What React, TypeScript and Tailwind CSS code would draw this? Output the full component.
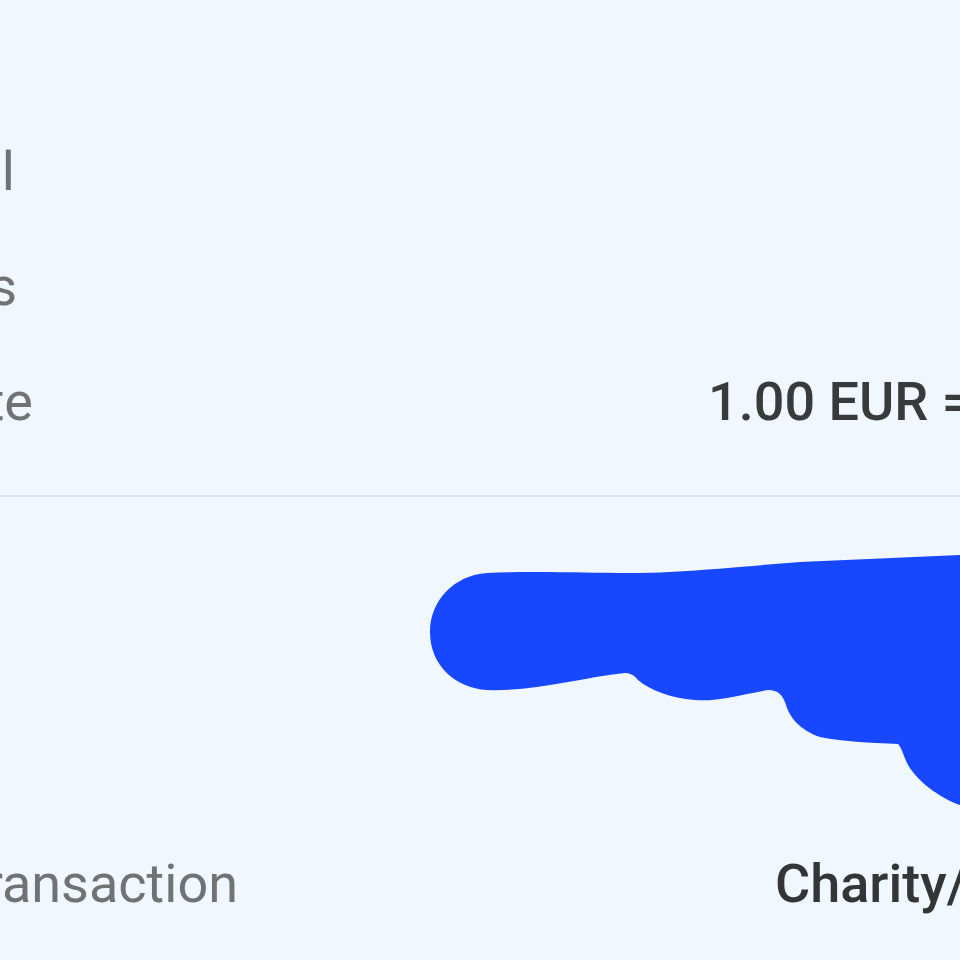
import React from "react";

const font = { fontFamily: "Roboto, 'Noto Sans', sans-serif" };

export default function App() {
  return (
    <div
      className="relative w-[960px] h-[960px] overflow-hidden bg-[#f0f7fe]"
      style={font}
    >
      <div className="flex flex-col pt-[114px]">
        <div className="flex h-[115px] items-center text-[54px] leading-[54px] whitespace-nowrap">
          <div className="flex w-[15px] shrink-0 justify-end text-[#707274]">
            <span>Total</span>
          </div>
        </div>
        <div className="flex h-[115px] items-center text-[54px] leading-[54px] whitespace-nowrap">
          <div className="flex w-[17px] shrink-0 justify-end text-[#707274]">
            <span>Fees</span>
          </div>
        </div>
        <div className="flex h-[115px] items-center text-[54px] leading-[54px] whitespace-nowrap">
          <div className="flex w-[33px] shrink-0 justify-end text-[#707274]">
            <span>Exchange rate</span>
          </div>
          <span className="ml-[675px] font-medium text-[#383a3c]">
            1.00 EUR = 1.00 EUR
          </span>
        </div>
      </div>

      <div className="mt-[36px] h-[2px] bg-[#dce4ed]" />

      <div className="flex flex-col pt-[329px]">
        <div className="flex h-[115px] items-center text-[54px] leading-[54px] whitespace-nowrap">
          <div className="flex w-[238px] shrink-0 justify-end text-[#707274]">
            <span>Transaction</span>
          </div>
          <span className="ml-[537px] font-medium text-[#343537]">
            Charity/Donation
          </span>
        </div>
      </div>

      <svg
        className="absolute left-0 top-0"
        width="960"
        height="960"
        viewBox="0 0 960 960"
      >
        <path
          fill="#1747fe"
          d="M 487 573 C 550 570, 620 575, 670 572 C 720 569, 760 565, 800 562 L 960 555 L 960 805 C 945 800, 920 785, 908 765 C 903 755, 902 748, 898 744 C 870 743, 840 741, 820 737 C 800 730, 790 718, 786 705 C 783 695, 778 690, 768 690 C 740 695, 715 702, 695 700 C 670 698, 650 690, 638 680 C 634 675, 630 673, 625 673 C 580 678, 530 692, 487 690 C 455 688, 430 665, 430 632 C 430 600, 455 575, 487 573 Z"
        />
      </svg>
    </div>
  );
}
